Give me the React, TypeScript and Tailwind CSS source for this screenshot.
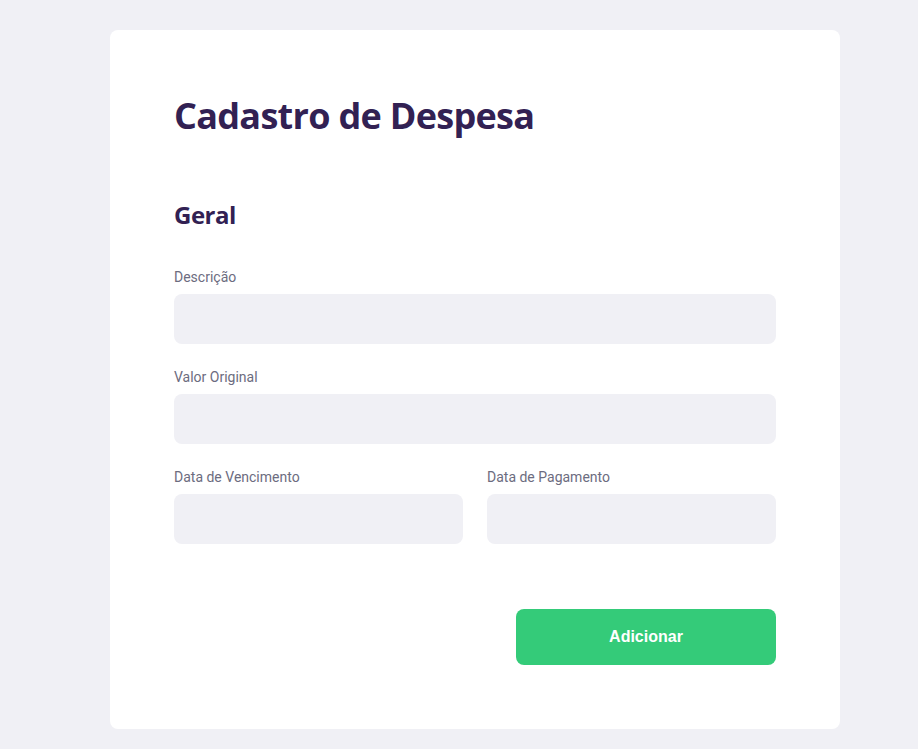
import React from 'react';

const Field: React.FC<{ label: string; className?: string }> = ({ label, className }) => (
  <div className={`flex flex-col ${className ?? ''}`}>
    <label className="text-[14px] leading-[18px] text-[#6c6c80] mb-[8px]">{label}</label>
    <input className="h-[50px] w-full rounded-lg bg-[#f0f0f5] outline-none px-4 text-[#6c6c80]" />
  </div>
);

const App: React.FC = () => {
  return (
    <div className="min-h-screen bg-[#f0f0f5] pt-[30px] pb-[20px]" style={{ fontFamily: 'Roboto, sans-serif' }}>
      <form className="ml-[110px] w-[730px] bg-white rounded-lg px-16 pt-16 pb-16">
        <h1 className="text-[36px] leading-[44px] font-bold tracking-[-0.7px] text-[#322153] font-['Open_Sans',sans-serif]">
          Cadastro de Despesa
        </h1>

        <fieldset className="mt-[62px]">
          <legend className="text-[24px] leading-[30px] font-bold tracking-[-0.5px] text-[#322153] font-['Open_Sans',sans-serif] mb-[38px]">
            Geral
          </legend>

          <Field label="Descrição" />
          <Field label="Valor Original" className="mt-[24px]" />

          <div className="grid grid-cols-2 gap-6 mt-[24px]">
            <Field label="Data de Vencimento" />
            <Field label="Data de Pagamento" />
          </div>
        </fieldset>

        <div className="flex justify-end mt-[65px]">
          <button
            type="button"
            className="w-[260px] h-[56px] rounded-lg bg-[#34cb79] text-white font-bold text-[16px] font-['Liberation_Sans',sans-serif]"
          >
            Adicionar
          </button>
        </div>
      </form>
    </div>
  );
};

export default App;
